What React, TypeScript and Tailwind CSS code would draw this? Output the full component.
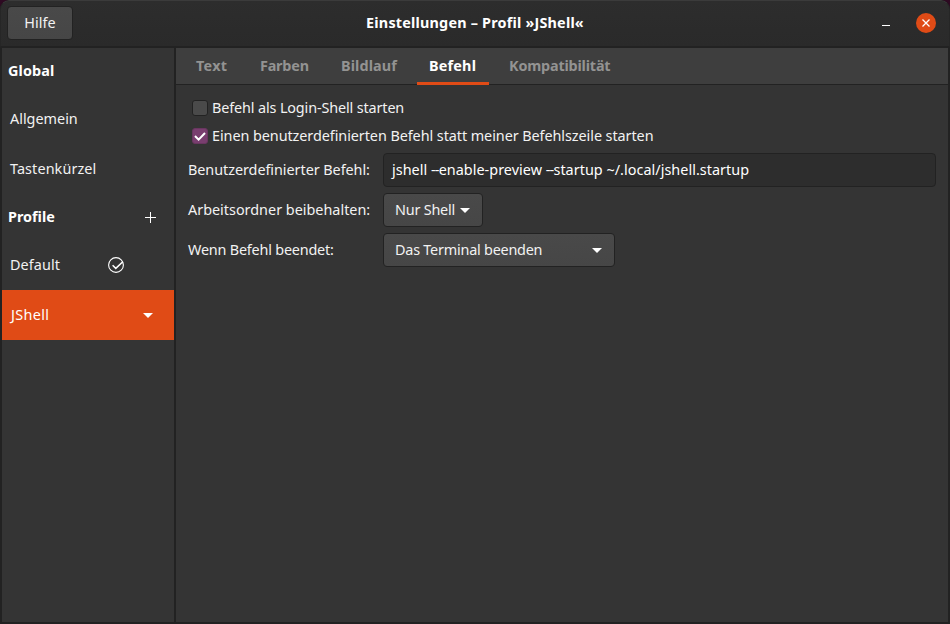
import type { ReactNode } from 'react';

function Caret() {
  return (
    <svg width="10" height="5" viewBox="0 0 10 5" className="shrink-0" fill="#fff">
      <path d="M0 0h10L5 5z" />
    </svg>
  );
}

function SideRow({ children, active, heading }: { children: ReactNode; active?: boolean; heading?: boolean }) {
  return (
    <div
      className={`flex shrink-0 items-center ${heading ? 'h-[46px] pl-[6px] font-bold text-white' : 'h-[50px] pl-2'} ${
        active ? 'bg-[#e04b16] text-white' : ''
      }`}
    >
      {children}
    </div>
  );
}

const button =
  'flex items-center rounded-[4px] border border-[#222] bg-linear-to-b from-[#494949] to-[#464646]';

export default function App() {
  return (
    <div className="h-[624px] w-[950px] bg-[#2e0a22] font-['Noto_Sans','Open_Sans',sans-serif] text-[14.4px] leading-5 text-[#f2f2f2]">
      <div className="flex h-full flex-col overflow-hidden rounded-t-[9px] bg-[#222] whitespace-nowrap">
        <header className="grid h-12 shrink-0 grid-cols-[1fr_auto_1fr] items-center rounded-t-[9px] border-x border-t border-b-2 border-x-[#262626] border-t-[#3b3b3b] border-b-[#222] bg-linear-to-b from-[#2d2d2d] to-[#2a2a2a] pb-px">
          <div className="flex pl-[6px]">
            <button className={`${button} h-[34px] w-[66px] justify-center`}>
              <span className="tracking-[0.1px]">Hilfe</span>
            </button>
          </div>
          <h1 className="font-bold tracking-[0.2px] text-white">Einstellungen – Profil »JShell«</h1>
          <div className="flex items-center justify-end pr-[13px]">
            <div className="mt-[5px] mr-[26px] h-px w-2 bg-white" />
            <div className="flex size-5 items-center justify-center rounded-full bg-[#e04b16]">
              <svg width="8" height="8" viewBox="0 0 8 8" stroke="#fff" strokeWidth="1.3">
                <path d="M.5.5l7 7M7.5.5l-7 7" />
              </svg>
            </div>
          </div>
        </header>

        <div className="flex flex-1 gap-0.5 px-0.5 pb-0.5">
          <aside className="flex w-[172px] flex-col bg-[#343434]">
            <SideRow heading>
              <span className="tracking-[0.1px]">Global</span>
            </SideRow>
            <SideRow>
              <span>Allgemein</span>
            </SideRow>
            <SideRow>
              <span className="tracking-[0.1px]">Tastenkürzel</span>
            </SideRow>
            <SideRow heading>
              <span className="flex-1">Profile</span>
              <svg width="11" height="11" viewBox="0 0 11 11" stroke="#fff" className="mr-[18px]">
                <path d="M5.5 0v11M0 5.5h11" />
              </svg>
            </SideRow>
            <SideRow>
              <span className="flex-1 tracking-[0.1px]">Default</span>
              <svg width="16" height="16" viewBox="0 0 16 16" fill="none" stroke="#fff" className="mr-[50px]">
                <circle cx="8" cy="8" r="7.4" strokeWidth="1.1" />
                <path d="M4.6 8.2l3.2 3.2 7-6.6" strokeWidth="1.5" />
              </svg>
            </SideRow>
            <SideRow active>
              <span className="flex-1 pl-px tracking-[0.35px]">JShell</span>
              <span className="mt-px mr-[21px]">
                <Caret />
              </span>
            </SideRow>
          </aside>

          <main className="flex w-[772px] flex-col bg-[#343434]">
            <nav className="flex h-[37px] shrink-0 border-b border-[#222] bg-[#3e3e3e] pl-2 font-bold text-[#939392]">
              <div className="flex w-[64px] items-start pt-2 pl-3">
                <span className="tracking-[0.3px]">Text</span>
              </div>
              <div className="flex w-[81px] items-start pt-2 pl-3">
                <span className="tracking-[-0.2px]">Farben</span>
              </div>
              <div className="flex w-[88px] items-start pt-2 pl-3">
                <span className="tracking-[0.1px]">Bildlauf</span>
              </div>
              <div className="-mb-px flex w-[72px] items-start border-b-3 border-[#e04b16] pt-2 pl-3 text-white">
                <span className="tracking-[0.2px]">Befehl</span>
              </div>
              <div className="ml-2 flex items-start pt-2 pl-3">
                <span className="tracking-[-0.18px]">Kompatibilität</span>
              </div>
            </nav>

            <div className="flex flex-col pt-[9px] pl-3">
              <label className="flex h-7 items-center pl-1">
                <span className="mr-1 size-4 rounded-[3px] border border-[#222] bg-[#4a4a4a]" />
                <span className="tracking-[-0.13px]">Befehl als Login-Shell starten</span>
              </label>
              <label className="flex h-7 items-center pl-1">
                <span className="mr-1 flex size-4 items-center justify-center rounded-[3px] border border-[#693660] bg-[#793e6f]">
                  <svg width="12" height="9" viewBox="0 0 12 9" fill="none" stroke="#fff" strokeWidth="2" className="shrink-0">
                    <path d="M1 4l3.6 3.6L11 1" />
                  </svg>
                </span>
                <span className="tracking-[-0.065px]">Einen benutzerdefinierten Befehl statt meiner Befehlszeile starten</span>
              </label>
              <div className="mt-[3px] grid grid-cols-[195px_553px] items-center gap-y-1.5">
                <span className="tracking-[-0.05px]">Benutzerdefinierter Befehl:</span>
                <div className="flex h-[34px] items-center rounded-[4px] border border-[#222] bg-[#2d2d2d] pl-2 text-white">
                  <span className="tracking-[0.03px]">
                    jshell <span className="tracking-[-0.8px]">--</span>enable-preview{' '}
                    <span className="tracking-[-0.8px]">--</span>startup ~/.local/jshell.startup
                  </span>
                </div>
                <span>Arbeitsordner beibehalten:</span>
                <button className={`${button} h-[34px] w-[100px] justify-between pr-3 pl-[11px]`}>
                  <span className="tracking-[-0.2px]">Nur Shell</span>
                  <Caret />
                </button>
                <span className="tracking-[-0.2px]">Wenn Befehl beendet:</span>
                <button className={`${button} h-[34px] w-[232px] justify-between pr-3 pl-[11px]`}>
                  <span className="tracking-[-0.22px]">Das Terminal beenden</span>
                  <Caret />
                </button>
              </div>
            </div>
          </main>
        </div>
      </div>
    </div>
  );
}
